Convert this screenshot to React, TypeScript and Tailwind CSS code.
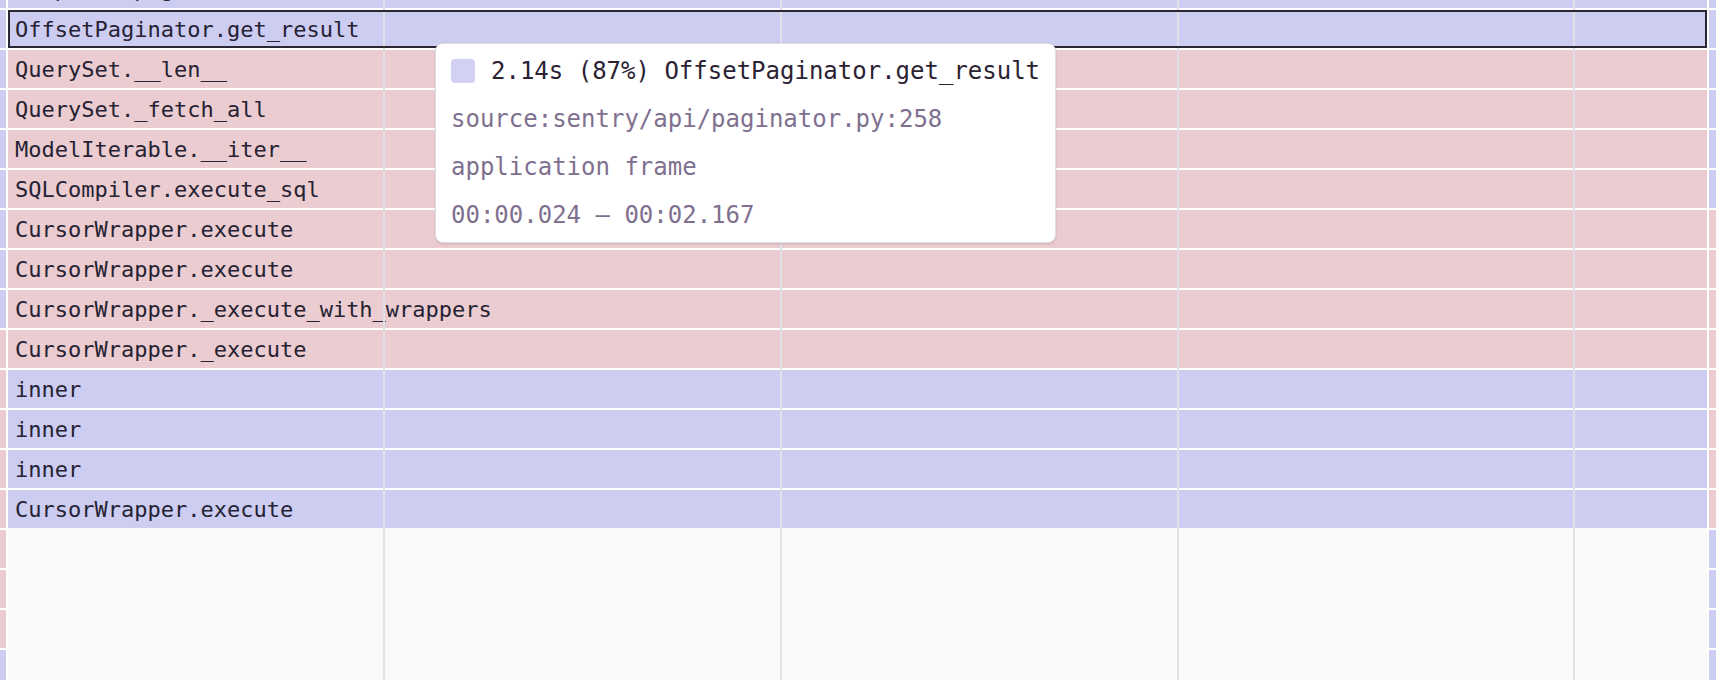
import React from "react";

type Row = { label: string; color: "p" | "r"; selected?: boolean };

const mainRows: Row[] = [
  { label: "Endpoint.paginate", color: "p" },
  { label: "OffsetPaginator.get_result", color: "p", selected: true },
  { label: "QuerySet.__len__", color: "r" },
  { label: "QuerySet._fetch_all", color: "r" },
  { label: "ModelIterable.__iter__", color: "r" },
  { label: "SQLCompiler.execute_sql", color: "r" },
  { label: "CursorWrapper.execute", color: "r" },
  { label: "CursorWrapper.execute", color: "r" },
  { label: "CursorWrapper._execute_with_wrappers", color: "r" },
  { label: "CursorWrapper._execute", color: "r" },
  { label: "inner", color: "p" },
  { label: "inner", color: "p" },
  { label: "inner", color: "p" },
  { label: "CursorWrapper.execute", color: "p" },
];

const leftStrip: ("p" | "r")[] = [
  "p", "p", "p", "p", "p", "p", "p", "p", "p",
  "r", "r", "r", "r", "r", "r", "r", "r",
  "p",
];

const rightStrip: ("p" | "r")[] = [
  "p", "p", "p", "p", "p", "p",
  "r", "r", "r", "r", "r", "r", "r", "r",
  "p", "p", "p", "p",
];

const bg = (c: "p" | "r") => (c === "p" ? "bg-[#cdcdf2]" : "bg-[#ebccd0]");

function Strip({ cells, width }: { cells: ("p" | "r")[]; width: string }) {
  return (
    <div className={`${width} shrink-0 flex flex-col gap-[2px] -mt-[30px]`}>
      {cells.map((c, i) => (
        <div key={i} className={`h-[38px] shrink-0 ${bg(c)}`} />
      ))}
    </div>
  );
}

export default function App() {
  return (
    <div
      className="relative w-[1716px] h-[680px] overflow-hidden bg-white flex gap-[2px]"
      style={{ fontFamily: '"DejaVu Sans Mono", "Liberation Mono", monospace' }}
    >
      <Strip cells={leftStrip} width="w-[6px]" />

      <div className="relative w-[1699px] shrink-0 flex flex-col">
        <div className="flex flex-col gap-[2px] -mt-[30px]">
          {mainRows.map((r, i) => (
            <div
              key={i}
              className={`relative h-[38px] shrink-0 ${bg(r.color)} pl-[7px] text-[22px] leading-[40px] text-[#252233] whitespace-nowrap`}
            >
              {r.label}
              {r.selected && (
                <div className="absolute inset-0 border-2 border-[#2b2733] z-20" />
              )}
            </div>
          ))}
        </div>
        <div className="flex-1 bg-[#f9f9fa]" />

        {/* vertical grid lines */}
        <div className="absolute top-0 bottom-0 left-[375px] w-[2px] bg-[#e1dfe7] z-10" />
        <div className="absolute top-0 bottom-0 left-[772px] w-[2px] bg-[#e1dfe7] z-10" />
        <div className="absolute top-0 bottom-0 left-[1169px] w-[2px] bg-[#e1dfe7] z-10" />
        <div className="absolute top-0 bottom-0 left-[1565px] w-[2px] bg-[#e1dfe7] z-10" />
      </div>

      <Strip cells={rightStrip} width="w-[7px]" />

      {/* tooltip */}
      <div className="absolute left-[435px] top-[43px] z-30 w-max bg-white border border-[#e0dce5] rounded-lg shadow-sm pl-[15px] pr-[15px] pt-[11px] pb-[11px] flex flex-col gap-[16px] text-[24px] leading-[32px]">
        <div className="flex items-center gap-[16px] text-[#2b2233] whitespace-nowrap">
          <div className="w-[24px] h-[24px] rounded-[4px] bg-[#d2d1f5] shrink-0" />
          <span>2.14s (87%) OffsetPaginator.get_result</span>
        </div>
        <div className="text-[#80708f] whitespace-nowrap">source:sentry/api/paginator.py:258</div>
        <div className="text-[#80708f] whitespace-nowrap">application frame</div>
        <div className="text-[#80708f] whitespace-nowrap">00:00.024 — 00:02.167</div>
      </div>
    </div>
  );
}
